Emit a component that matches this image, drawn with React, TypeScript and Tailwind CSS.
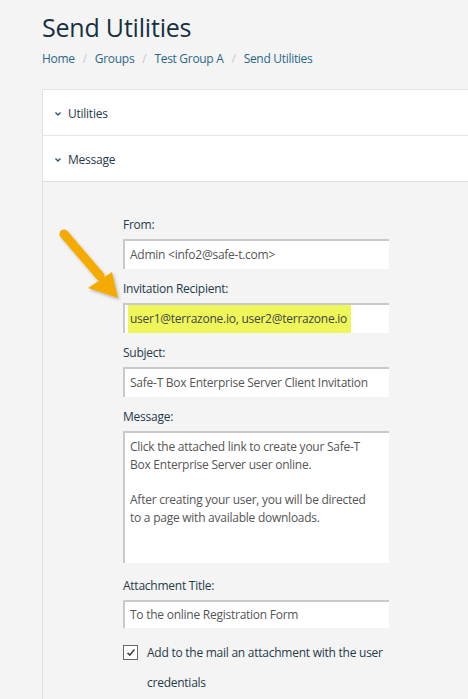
import { useState } from "react";

const labelCls = "block text-[12px] tracking-[-0.25px] leading-[20px] text-[#1f3a4a]";
const inputCls =
  "block w-[266px] h-[30px] bg-white border-t-2 border-l-2 border-[#c9c9c9] px-[5px] text-[12px] tracking-[-0.25px] text-[#555] leading-[28px] whitespace-nowrap overflow-hidden";

const Arrow = () => (
  <svg
    className="absolute left-[52px] top-[226px]"
    width="76"
    height="80"
    viewBox="0 0 76 80"
  >
    <defs>
      <filter id="sh" x="-20%" y="-20%" width="150%" height="150%">
        <feDropShadow dx="1.5" dy="2" stdDeviation="1.5" floodColor="#000" floodOpacity="0.25" />
      </filter>
    </defs>
    <g filter="url(#sh)">
      <line x1="12" y1="8" x2="48" y2="50" stroke="#f5aa00" strokeWidth="9" strokeLinecap="round" />
      <polygon points="36,62 60,46 66,72" fill="#f5aa00" />
    </g>
  </svg>
);

const Chevron = () => (
  <svg width="8" height="6" viewBox="0 0 8 6" className="mr-[6px]">
    <path d="M1.5 1.5 L4 4 L6.5 1.5" stroke="#2a5470" strokeWidth="1.4" fill="none" />
  </svg>
);

export default function App() {
  const [checked, setChecked] = useState(true);
  return (
    <div
      className="relative w-[468px] h-[699px] overflow-hidden bg-[#f4f4f4] pl-[42px]"
      style={{ fontFamily: '"Open Sans", "Noto Sans", sans-serif' }}
    >
      <h1 className="pt-[7px] text-[25px] tracking-[-0.2px] leading-[40px] text-[#15303f]">Send Utilities</h1>
      <div className="mt-[2px] flex items-center text-[12px] tracking-[-0.3px] leading-[20px] text-[#2a6888]">
        <span>Home</span>
        <span className="mx-[8px] text-[#c8c8c8]">/</span>
        <span>Groups</span>
        <span className="mx-[8px] text-[#c8c8c8]">/</span>
        <span>Test Group A</span>
        <span className="mx-[8px] text-[#c8c8c8]">/</span>
        <span>Send Utilities</span>
      </div>

      <div className="mt-[20px] border-l border-t border-[#e2e2e2]">
        <div className="h-[46px] bg-white border-b border-[#e6e6e6] flex items-center pl-[11px] pt-[2px] text-[12px] tracking-[-0.25px] text-[#1f3a4a]">
          <Chevron />
          Utilities
        </div>
        <div className="h-[46px] bg-white border-b border-[#dcdcdc] flex items-center pl-[11px] pt-[2px] text-[12px] tracking-[-0.25px] text-[#1f3a4a]">
          <Chevron />
          Message
        </div>
        <div className="bg-[#f4f4f4] pl-[80px] pt-[33px] pb-[40px]">
          <label className={labelCls}>From:</label>
          <div className={`${inputCls} mt-[4px]`}>Admin &lt;info2@safe-t.com&gt;</div>

          <label className={`${labelCls} mt-[10px]`}>Invitation Recipient:</label>
          <div className={`${inputCls} mt-[4px] !px-0 !pl-[3px]`}>
            <span className="inline-block h-full bg-[#eef65a] pl-[2px] pr-[4px] text-[#444]">
              user1@terrazone.io, user2@terrazone.io
            </span>
          </div>

          <label className={`${labelCls} mt-[10px]`}>Subject:</label>
          <div className={`${inputCls} mt-[4px]`}>Safe-T Box Enterprise Server Client Invitation</div>

          <label className={`${labelCls} mt-[10px]`}>Message:</label>
          <div className="mt-[4px] w-[266px] h-[132px] bg-white border-t-2 border-l-2 border-[#c9c9c9] pl-[5px] pr-[18px] pt-[5px] text-[12px] tracking-[-0.25px] leading-[18px] text-[#555]">
            <p>Click the attached link to create your Safe-T Box Enterprise Server user online.</p>
            <p className="mt-[17px]">After creating your user, you will be directed to a page with available downloads.</p>
          </div>

          <label className={`${labelCls} mt-[13px]`}>Attachment Title:</label>
          <div className={`${inputCls} mt-[4px] !h-[28px] !leading-[26px]`}>To the online Registration Form</div>

          <div className="mt-[10px] flex items-start">
            <button
              onClick={() => setChecked(!checked)}
              className="mt-[7px] w-[15px] h-[15px] shrink-0 border border-[#666] bg-white flex items-center justify-center"
            >
              {checked && (
                <svg width="10" height="9" viewBox="0 0 10 9">
                  <path d="M1.5 4.8 L3.8 7 L8.5 1.5" stroke="#444" strokeWidth="1.6" fill="none" />
                </svg>
              )}
            </button>
            <span className="ml-[9px] w-[240px] text-[12px] tracking-[-0.25px] leading-[30px] text-[#1f3a4a]">
              Add to the mail an attachment with the user credentials
            </span>
          </div>
        </div>
      </div>
      <Arrow />
    </div>
  );
}
